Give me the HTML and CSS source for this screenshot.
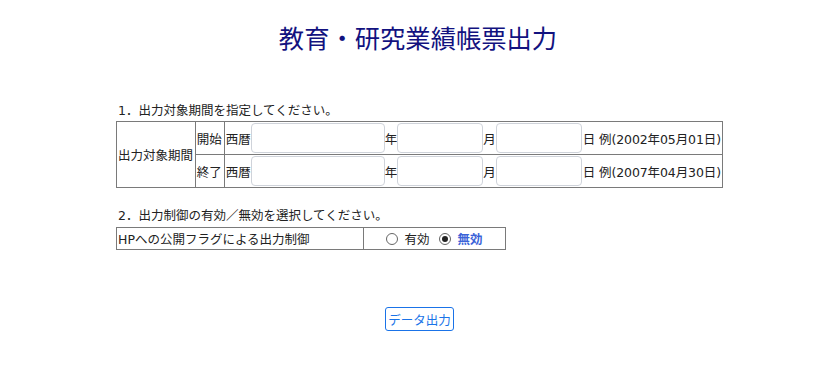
FILE: index.html
```html
<!DOCTYPE html>
<html lang="ja">
<head>
<meta charset="utf-8">
<title>教育・研究業績帳票出力</title>
<link rel="stylesheet" href="styles.css">
</head>
<body>
<h1 class="title">教育・研究業績帳票出力</h1>
<div class="content">
  <p class="label label-first">1．出力対象期間を指定してください。</p>
  <table class="grid period">
    <tr>
      <td class="c-head" rowspan="2">出力対象期間</td>
      <td class="c-kind">開始</td>
      <td class="c-date">
        <div class="date-row">
          <span>西暦</span><input class="in-year" type="text"><span>年</span><input class="in-md" type="text"><span>月</span><input class="in-md" type="text"><span class="tail">日 例(2002年05月01日)</span>
        </div>
      </td>
    </tr>
    <tr>
      <td class="c-kind">終了</td>
      <td class="c-date">
        <div class="date-row">
          <span>西暦</span><input class="in-year" type="text"><span>年</span><input class="in-md" type="text"><span>月</span><input class="in-md" type="text"><span class="tail">日 例(2007年04月30日)</span>
        </div>
      </td>
    </tr>
  </table>

  <p class="label label-second">2．出力制御の有効／無効を選択してください。</p>
  <table class="grid ctrl">
    <tr>
      <td class="c-ctrl-name">HPへの公開フラグによる出力制御</td>
      <td class="c-ctrl-opt">
        <label class="opt"><input type="radio" name="flag" class="radio"><span>有効</span></label>
        <label class="opt opt-on"><input type="radio" name="flag" class="radio" checked><span>無効</span></label>
      </td>
    </tr>
  </table>
</div>
<div class="actions">
  <button class="btn" type="button">データ出力</button>
</div>
</body>
</html>
```

FILE: styles.css
```css
html, body {
  margin: 0;
  padding: 0;
  background: #ffffff;
}
body {
  font-family: "DejaVu Sans", "Noto Sans CJK JP", sans-serif;
  font-size: 12.5px;
  color: #222222;
}
.title {
  margin: 0;
  padding-top: 22px;
  padding-left: 8px;
  height: 30px;
  line-height: 30px;
  text-align: center;
  font-family: "Noto Sans CJK JP", sans-serif;
  font-weight: normal;
  font-size: 25.3px;
  color: #12127f;
}
.content {
  margin-left: 116px;
}
.label {
  margin: 0;
  line-height: 16px;
  padding-left: 2px;
}
.label-first {
  margin-top: 51px;
  margin-bottom: 2px;
}
.label-second {
  margin-top: 20px;
  margin-bottom: 3px;
}
.grid {
  border-collapse: collapse;
}
.grid td {
  border: 1px solid #7a7a7a;
  padding: 0 1px;
  white-space: nowrap;
}
.period {
  width: 607px;
}
.c-head {
  width: 76px;
}
.c-kind {
  width: 26px;
}
.c-date {
  padding: 1px 1px;
}
.date-row {
  display: flex;
  align-items: center;
  height: 32px;
}
.date-row input {
  box-sizing: border-box;
  height: 30px;
  margin: 0;
  border: 1px solid #cfd3da;
  border-radius: 4px;
  background: #fff;
  padding: 0 6px;
  outline: none;
}
.in-year {
  width: 134px;
}
.in-md {
  width: 86px;
}
.tail {
  margin-left: 1px;
  letter-spacing: -0.1px;
}
.ctrl {
  width: 390px;
}
.ctrl td {
  height: 21px;
  padding: 0 1px;
}
.c-ctrl-name {
  width: 244px;
}
.c-ctrl-opt {
  text-align: center;
}
.opt {
  display: inline-flex;
  align-items: center;
  margin: 0 3px;
}
.opt span {
  margin-left: 6px;
}
.opt-on span {
  color: #3b63d8;
  font-weight: bold;
}
.radio {
  appearance: none;
  -webkit-appearance: none;
  box-sizing: border-box;
  width: 12px;
  height: 12px;
  margin: 0;
  border: 1px solid #666;
  border-radius: 50%;
  background: #fff;
  position: relative;
}
.radio:checked::after {
  content: "";
  position: absolute;
  left: 2px;
  top: 2px;
  width: 6px;
  height: 6px;
  border-radius: 50%;
  background: #222;
}
.actions {
  margin-top: 57px;
  text-align: center;
  padding-left: 11px;
}
.btn {
  box-sizing: border-box;
  width: 69px;
  height: 24px;
  padding: 0;
  font-family: "DejaVu Sans", "Noto Sans CJK JP", sans-serif;
  font-size: 12.5px;
  color: #1a73e8;
  background: #fff;
  border: 1px solid #1a73e8;
  border-radius: 3px;
}
```
